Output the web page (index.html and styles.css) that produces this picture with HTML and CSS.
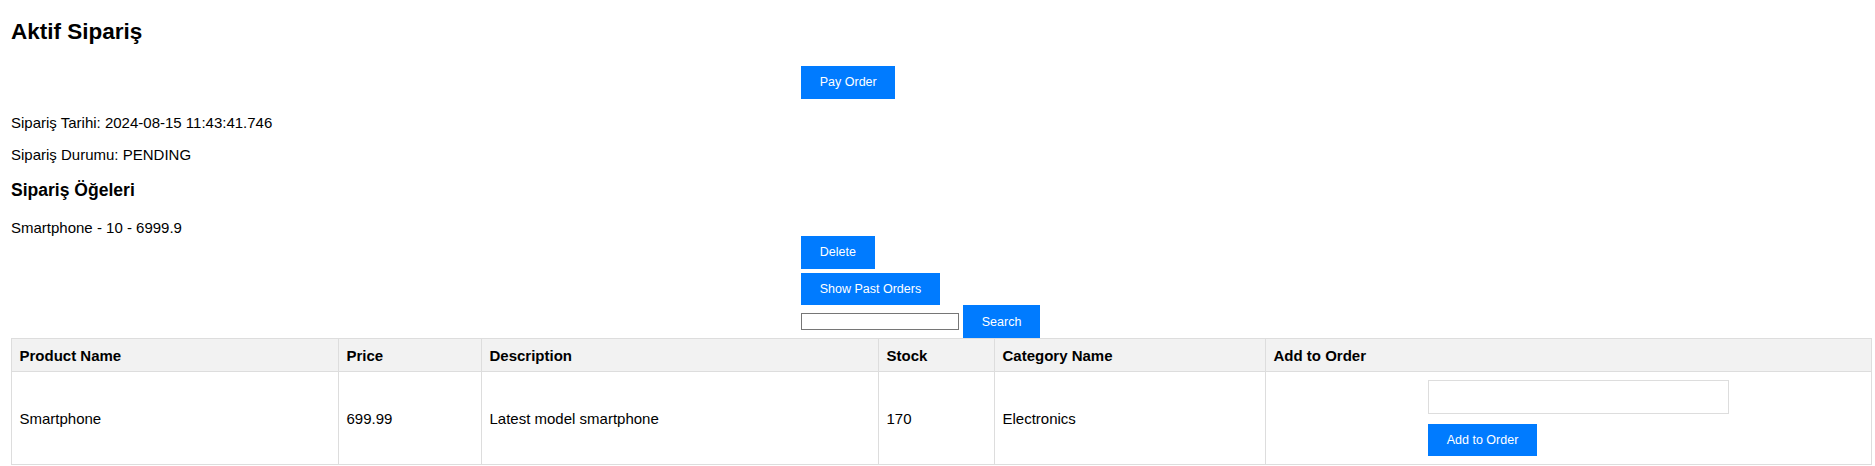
FILE: index.html
```html
<!DOCTYPE html>
<html lang="tr">
<head>
<meta charset="utf-8">
<title>Aktif Sipariş</title>
<link rel="stylesheet" href="styles.css">
</head>
<body>
<div class="page">
  <h2 class="title">Aktif Sipariş</h2>
  <div class="action-row pay-row"><button class="btn">Pay Order</button></div>
  <p class="info">Sipariş Tarihi: 2024-08-15 11:43:41.746</p>
  <p class="info">Sipariş Durumu: PENDING</p>
  <h3 class="subtitle">Sipariş Öğeleri</h3>
  <div class="order-item">Smartphone - 10 - 6999.9</div>
  <div class="action-row delete-row"><button class="btn">Delete</button></div>
  <div class="action-row"><button class="btn">Show Past Orders</button></div>
  <div class="action-row search-row"><input class="search-input" type="text"><button class="btn">Search</button></div>
  <table class="products">
    <thead>
      <tr>
        <th class="col-name">Product Name</th>
        <th class="col-price">Price</th>
        <th class="col-desc">Description</th>
        <th class="col-stock">Stock</th>
        <th class="col-cat">Category Name</th>
        <th class="col-add">Add to Order</th>
      </tr>
    </thead>
    <tbody>
      <tr>
        <td>Smartphone</td>
        <td>699.99</td>
        <td>Latest model smartphone</td>
        <td>170</td>
        <td>Electronics</td>
        <td>
          <div class="add-form">
            <input class="qty-input" type="text">
            <button class="btn">Add to Order</button>
          </div>
        </td>
      </tr>
    </tbody>
  </table>
</div>
</body>
</html>
```

FILE: styles.css
```css
body {
  margin: 0;
  font-family: "Liberation Sans", Arial, sans-serif;
  font-size: 15px;
  color: #000;
  background: #fff;
}

.page {
  padding: 0 3px 0 11px;
}

.title {
  font-size: 22.5px;
  font-weight: bold;
  margin: 18.7px 0 0;
}

.pay-row {
  margin-top: 21.4px;
}

.info {
  margin: 15px 0;
}

.subtitle {
  font-size: 17.55px;
  font-weight: bold;
  margin: 17.55px 0;
}

.action-row {
  display: flex;
  align-items: center;
  gap: 4px;
  padding-left: 790px;
}

.delete-row {
  margin-bottom: 4px;
}

.btn {
  font-family: "Liberation Sans", Arial, sans-serif;
  font-size: 12.5px;
  line-height: normal;
  padding: 9.375px 18.75px;
  background: #007bff;
  color: #fff;
  border: none;
  margin: 0;
  cursor: pointer;
}

.search-input {
  box-sizing: border-box;
  width: 158px;
  height: 17px;
  margin: 0;
  padding: 1px 2px;
  border: 1px solid #767676;
  font-size: 12.5px;
  background: #fff;
}

.products {
  width: 100%;
  border-collapse: collapse;
  table-layout: fixed;
}

.products th,
.products td {
  box-sizing: border-box;
  border: 1px solid #ddd;
  padding: 7.5px;
  text-align: left;
  vertical-align: middle;
}

.products th {
  background: #f2f2f2;
  font-weight: bold;
}

.col-name { width: 327px; }
.col-price { width: 143px; }
.col-desc { width: 397px; }
.col-stock { width: 116px; }
.col-cat { width: 271px; }

.add-form {
  display: flex;
  flex-direction: column;
  align-items: flex-start;
  padding-left: 154.5px;
}

.qty-input {
  box-sizing: border-box;
  width: 301px;
  height: 34.3px;
  margin: 0 0 9.7px;
  padding: 7.5px;
  border: 1px solid #ddd;
  font-size: 15px;
  background: #fff;
}
```
